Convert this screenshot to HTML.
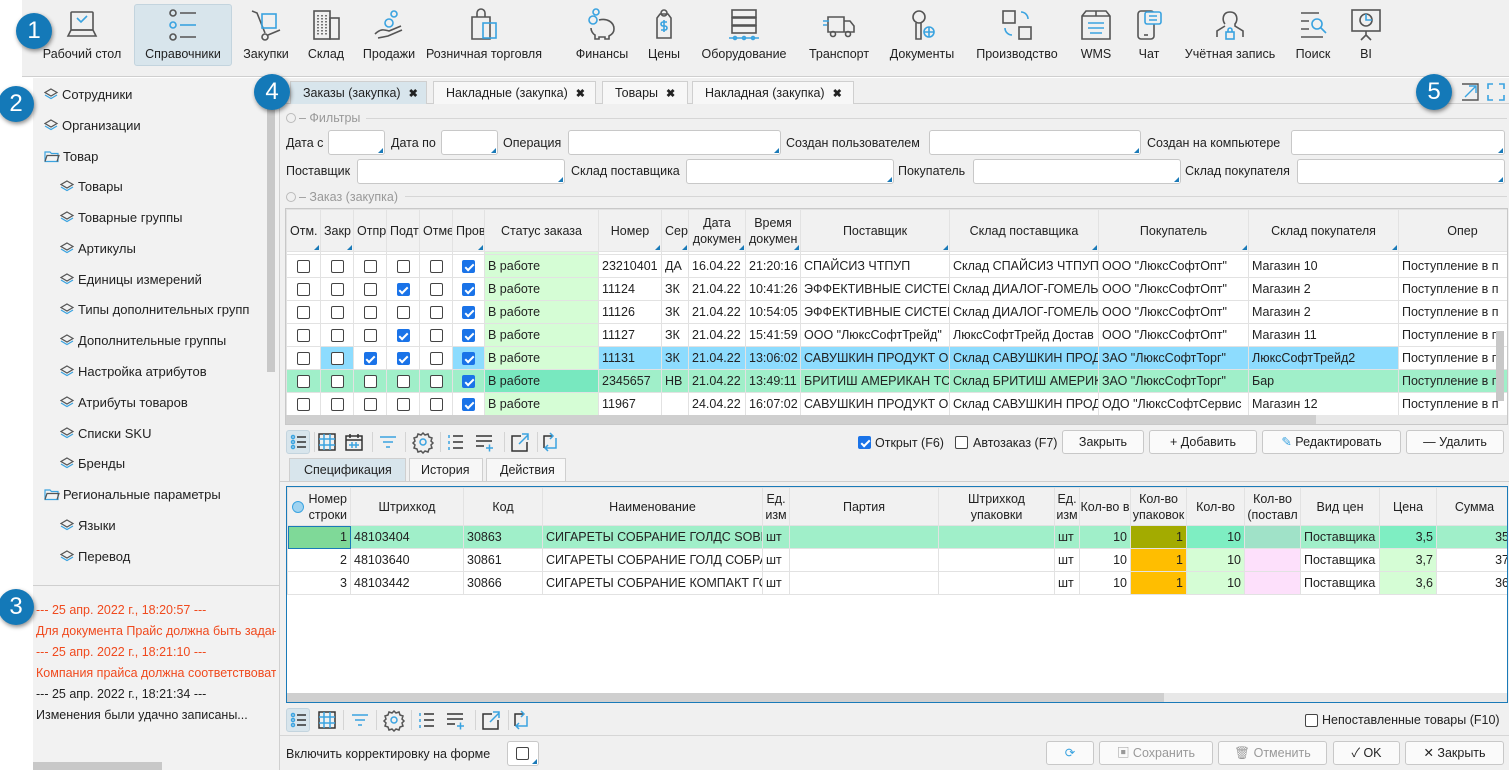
<!DOCTYPE html>
<html><head><meta charset="utf-8">
<style>
*{box-sizing:border-box;margin:0;padding:0}
body{width:1509px;height:770px;overflow:hidden;background:#fff;font-family:"Liberation Sans","Noto Sans CJK SC",sans-serif;font-size:12.5px;color:#222;position:relative}
.a{position:absolute}
#tb{left:22px;top:0;width:1487px;height:77px;background:#f0f0f0;border-bottom:1px solid #cfcfcf}
.ti{position:absolute;top:0;height:66px;text-align:center;font-size:12.5px}
.ti svg{position:absolute;top:8px;left:50%;margin-left:-17px}
.ti span{position:absolute;top:47px;left:0;right:0;white-space:nowrap}
#lp{left:33px;top:78px;width:247px;height:692px;background:#f2f2f2;border-right:1px solid #d0d0d0}
.tr{position:absolute;font-size:13px;white-space:nowrap}
.tr svg{vertical-align:-2px;margin-right:3px}
#rp{left:280px;top:78px;width:1229px;height:692px;background:#f0f0f0}
.tab{position:absolute;top:81px;height:23px;border:1px solid #cfcfcf;border-bottom:none;background:#f7f7f7;font-size:12.5px;padding:4px 0 0 12px;white-space:nowrap}
.tab b{font-size:11px;margin-left:8px}
.lbl{position:absolute;font-size:12.5px;white-space:nowrap}
.inp{position:absolute;height:25px;background:#fff;border:1px solid #c8c8c8;border-radius:3px}
.inp:after{content:"";position:absolute;right:1px;bottom:1px;border-left:5px solid transparent;border-bottom:5px solid #1a7ab8}
.sec{position:absolute;color:#999;font-size:12.5px;white-space:nowrap}
.sec i{display:inline-block;width:10px;height:10px;border:1px solid #bbb;border-radius:50%;vertical-align:-1px;margin-right:3px}
table{border-collapse:collapse;table-layout:fixed;position:absolute;background:#fff}
td,th{border:1px solid #e2e2e2;overflow:hidden;white-space:nowrap;font-weight:normal;padding:0 3px;font-size:12.5px}
th{background:#f1f1f1;text-align:center;line-height:16px;position:relative;white-space:normal;overflow-wrap:normal;word-break:normal}
th.t:after{content:"";position:absolute;right:1px;bottom:1px;border-left:5px solid transparent;border-bottom:5px solid #1a7ab8}
.cb{display:inline-block;width:13px;height:13px;border:1px solid #444;border-radius:2px;background:#fff;vertical-align:middle;position:relative}
.ck{background:#1a73e8;border-color:#1a73e8}
.ck:after{content:"";position:absolute;left:3.5px;top:0.5px;width:3px;height:7px;border:solid #fff;border-width:0 2px 2px 0;transform:rotate(45deg)}
td.c{text-align:center}
td.r{text-align:right}
.g{background:#d5fdd5}
.bl{background:#8ddcfe}
.gr{background:#a0efc9}
.gs{background:#78e8bf}
.btn{position:absolute;height:24px;border:1px solid #c8c8c8;border-radius:3px;background:#fafafa;font-size:12.5px;text-align:center;line-height:22px;white-space:nowrap}
.num{position:absolute;width:36px;height:36px;border-radius:50%;background:#1479b8;color:#fff;font-size:24px;text-align:center;line-height:36px;box-shadow:1px 2px 4px rgba(0,0,0,.45);font-family:"Liberation Sans",sans-serif}
.sep{position:absolute;width:1px;height:20px;background:#d4d4d4}
.log{position:absolute;left:36px;font-size:12.5px;white-space:nowrap;width:240px;overflow:hidden}
</style></head><body>

<div id="tb" class="a">
 <div class="ti" style="left:112px;width:98px;top:4px;height:62px;background:#d8e5ec;border:1px solid #c3d4de;border-radius:3px"></div>
</div>
<div class="ti" style="left:40px;width:84px"><svg width="34" height="34" viewBox="0 0 34 34" fill="none" stroke="#555" stroke-width="1.6"><rect x="6" y="4" width="22" height="18" rx="1"/><path d="M3 28h28l-3-6H6z"/><path d="M12 10l4 4 6-6" stroke="#3aa3e0"/></svg><span>Рабочий стол</span></div>
<div class="ti" style="left:134px;width:98px"><svg width="34" height="34" viewBox="0 0 34 34" fill="none" stroke-width="1.6"><circle cx="7" cy="5" r="3" stroke="#555"/><circle cx="7" cy="17" r="3" stroke="#3aa3e0"/><circle cx="7" cy="29" r="3" stroke="#555"/><path d="M14 5h16M14 29h16" stroke="#555"/><path d="M14 17h16" stroke="#3aa3e0"/></svg><span>Справочники</span></div>
<div class="ti" style="left:238px;width:56px"><svg width="34" height="34" viewBox="0 0 34 34" fill="none" stroke="#555" stroke-width="1.6"><path d="M3 3l5 2 8 20"/><circle cx="16" cy="29" r="3"/><rect x="13" y="6" width="14" height="14" stroke="#3aa3e0"/><path d="M19 27l12-5"/></svg><span>Закупки</span></div>
<div class="ti" style="left:302px;width:48px"><svg width="34" height="34" viewBox="0 0 34 34" fill="none" stroke="#555" stroke-width="1.6"><rect x="5" y="3" width="16" height="28"/><rect x="21" y="10" width="9" height="21"/><path d="M9 7v20M13 7v20M17 7v20" stroke-dasharray="1.5 1.5"/></svg><span>Склад</span></div>
<div class="ti" style="left:356px;width:66px"><svg width="34" height="34" viewBox="0 0 34 34" fill="none" stroke-width="1.6"><circle cx="22" cy="6" r="3" stroke="#3aa3e0"/><circle cx="17" cy="15" r="4" stroke="#3aa3e0"/><path d="M3 26c6-6 10-4 14-3l12-5M6 30l10-2 14-6" stroke="#555"/></svg><span>Продажи</span></div>
<div class="ti" style="left:426px;width:116px"><svg width="34" height="34" viewBox="0 0 34 34" fill="none" stroke-width="1.6"><path d="M5 9h18v22H5zM10 9V5a4 4 0 018 0v4" stroke="#555"/><rect x="16" y="15" width="13" height="15" stroke="#3aa3e0"/></svg><span>Розничная торговля</span></div>
<div class="ti" style="left:570px;width:64px"><svg width="34" height="34" viewBox="0 0 34 34" fill="none" stroke-width="1.6"><circle cx="11" cy="4" r="3" stroke="#3aa3e0"/><circle cx="8" cy="12" r="4" stroke="#3aa3e0"/><path d="M14 12c8-2 15 2 15 9 0 4-3 6-5 7v3h-4v-2h-6v2h-4v-4c-2-1-4-4-4-7" stroke="#555"/></svg><span>Финансы</span></div>
<div class="ti" style="left:642px;width:44px"><svg width="34" height="34" viewBox="0 0 34 34" fill="none" stroke-width="1.6"><path d="M10 10l3-4h8l3 4v20H10z" stroke="#555"/><circle cx="17" cy="5" r="3" stroke="#555"/><path d="M20 14h-4a2 2 0 000 4h2a2 2 0 010 4h-4M17 12v12" stroke="#3aa3e0"/></svg><span>Цены</span></div>
<div class="ti" style="left:694px;width:100px"><svg width="34" height="34" viewBox="0 0 34 34" fill="none" stroke-width="1.6"><rect x="5" y="2" width="24" height="7" stroke="#555"/><rect x="5" y="10" width="24" height="7" stroke="#555"/><rect x="5" y="18" width="24" height="7" stroke="#555"/><path d="M2 30h30" stroke="#3aa3e0"/><circle cx="8" cy="30" r="1.5" stroke="#3aa3e0"/><circle cx="17" cy="30" r="1.5" stroke="#3aa3e0"/><circle cx="26" cy="30" r="1.5" stroke="#3aa3e0"/></svg><span>Оборудование</span></div>
<div class="ti" style="left:804px;width:70px"><svg width="34" height="34" viewBox="0 0 34 34" fill="none" stroke-width="1.6"><path d="M6 9h16v15H6zM22 13h6l4 5v6H22" stroke="#555"/><circle cx="11" cy="26" r="2.5" stroke="#555"/><circle cx="26" cy="26" r="2.5" stroke="#555"/><path d="M1 13h6M1 17h4" stroke="#3aa3e0"/></svg><span>Транспорт</span></div>
<div class="ti" style="left:886px;width:72px"><svg width="34" height="34" viewBox="0 0 34 34" fill="none" stroke-width="1.6"><circle cx="14" cy="9" r="6" stroke="#555"/><path d="M11 15v16h5V15" stroke="#555"/><circle cx="24" cy="24" r="5" stroke="#3aa3e0"/><path d="M19 24h10M24 19v10" stroke="#3aa3e0"/></svg><span>Документы</span></div>
<div class="ti" style="left:970px;width:94px"><svg width="34" height="34" viewBox="0 0 34 34" fill="none" stroke-width="1.6"><rect x="3" y="3" width="12" height="12" stroke="#555"/><rect x="19" y="19" width="12" height="12" stroke="#555"/><path d="M21 4a7 7 0 017 7M5 20a7 7 0 007 7" stroke="#3aa3e0"/></svg><span>Производство</span></div>
<div class="ti" style="left:1074px;width:44px"><svg width="34" height="34" viewBox="0 0 34 34" fill="none" stroke-width="1.6"><path d="M3 8l4-5h20l4 5v23H3zM3 8h28M17 3v5" stroke="#555"/><path d="M9 15h16M9 20h16M11 25h12" stroke="#3aa3e0"/></svg><span>WMS</span></div>
<div class="ti" style="left:1128px;width:42px"><svg width="34" height="34" viewBox="0 0 34 34" fill="none" stroke-width="1.6"><rect x="6" y="3" width="16" height="28" rx="3" stroke="#555"/><path d="M12 27h4" stroke="#555"/><rect x="13" y="4" width="16" height="12" rx="2" fill="#f0f0f0" stroke="#3aa3e0"/><path d="M17 8h8M17 12h8" stroke="#3aa3e0"/></svg><span>Чат</span></div>
<div class="ti" style="left:1180px;width:100px"><svg width="34" height="34" viewBox="0 0 34 34" fill="none" stroke-width="1.6"><path d="M12 16c-3-3-3-12 5-12s8 9 5 12v2l8 5v6M4 29v-6l8-5" stroke="#555"/><rect x="13" y="24" width="8" height="7" stroke="#3aa3e0"/><path d="M15 24v-2a2 2 0 014 0v2" stroke="#3aa3e0"/></svg><span>Учётная запись</span></div>
<div class="ti" style="left:1290px;width:46px"><svg width="34" height="34" viewBox="0 0 34 34" fill="none" stroke-width="1.6"><path d="M5 5h18M5 13h8M5 21h8M5 29h22" stroke="#555"/><circle cx="21" cy="16" r="5" stroke="#3aa3e0"/><path d="M25 20l5 5" stroke="#3aa3e0"/></svg><span>Поиск</span></div>
<div class="ti" style="left:1346px;width:40px"><svg width="34" height="34" viewBox="0 0 34 34" fill="none" stroke-width="1.6"><rect x="3" y="2" width="28" height="21" stroke="#555"/><path d="M17 23v4l-5 5M17 27l5 5" stroke="#555"/><circle cx="17" cy="12" r="6" stroke="#555"/><path d="M17 6v6h6" stroke="#3aa3e0"/></svg><span>BI</span></div>

<div id="lp" class="a">
 <div class="a" style="left:234px;top:2px;width:8px;height:292px;background:#c8c8c8"></div>
 <div class="a" style="left:0;top:507px;width:247px;height:1px;background:#cfcfcf"></div>
 <div class="a" style="left:0;top:684px;width:129px;height:8px;background:#c8c8c8"></div>
</div>
<svg width="0" height="0" style="position:absolute"><defs><g id="ly"><path d="M7 1l6 3.5-6 3.5-6-3.5z" fill="none" stroke="#555" stroke-width="1.2"/><path d="M1 7l6 3.5 6-3.5" fill="none" stroke="#3aa3e0" stroke-width="1.2"/></g><g id="fd"><path d="M1 3h5l1.5 1.5H14v8H1z" fill="none" stroke="#3aa3e0" stroke-width="1.2"/><path d="M1 12.5l2-6h12l-2 6" fill="none" stroke="#555" stroke-width="1.2"/></g></defs></svg>
<div class="tr" style="left:44px;top:87px"><svg width="15" height="13"><use href="#ly"/></svg>Сотрудники</div>
<div class="tr" style="left:44px;top:118px"><svg width="15" height="13"><use href="#ly"/></svg>Организации</div>
<div class="tr" style="left:44px;top:149px"><svg width="16" height="14"><use href="#fd"/></svg>Товар</div>
<div class="tr" style="left:60px;top:179px"><svg width="15" height="13"><use href="#ly"/></svg>Товары</div>
<div class="tr" style="left:60px;top:210px"><svg width="15" height="13"><use href="#ly"/></svg>Товарные группы</div>
<div class="tr" style="left:60px;top:241px"><svg width="15" height="13"><use href="#ly"/></svg>Артикулы</div>
<div class="tr" style="left:60px;top:272px"><svg width="15" height="13"><use href="#ly"/></svg>Единицы измерений</div>
<div class="tr" style="left:60px;top:302px"><svg width="15" height="13"><use href="#ly"/></svg>Типы дополнительных групп</div>
<div class="tr" style="left:60px;top:333px"><svg width="15" height="13"><use href="#ly"/></svg>Дополнительные группы</div>
<div class="tr" style="left:60px;top:364px"><svg width="15" height="13"><use href="#ly"/></svg>Настройка атрибутов</div>
<div class="tr" style="left:60px;top:395px"><svg width="15" height="13"><use href="#ly"/></svg>Атрибуты товаров</div>
<div class="tr" style="left:60px;top:426px"><svg width="15" height="13"><use href="#ly"/></svg>Списки SKU</div>
<div class="tr" style="left:60px;top:456px"><svg width="15" height="13"><use href="#ly"/></svg>Бренды</div>
<div class="tr" style="left:44px;top:487px"><svg width="16" height="14"><use href="#fd"/></svg>Региональные параметры</div>
<div class="tr" style="left:60px;top:518px"><svg width="15" height="13"><use href="#ly"/></svg>Языки</div>
<div class="tr" style="left:60px;top:549px"><svg width="15" height="13"><use href="#ly"/></svg>Перевод</div>

<div class="log" style="top:603px;color:#f04a1e">--- 25 апр. 2022 г., 18:20:57 ---</div>
<div class="log" style="top:624px;color:#f04a1e">Для документа Прайс должна быть задана</div>
<div class="log" style="top:645px;color:#f04a1e">--- 25 апр. 2022 г., 18:21:10 ---</div>
<div class="log" style="top:666px;color:#f04a1e">Компания прайса должна соответствовать</div>
<div class="log" style="top:687px">--- 25 апр. 2022 г., 18:21:34 ---</div>
<div class="log" style="top:708px">Изменения были удачно записаны...</div>

<div id="rp" class="a"></div>
<div class="a" style="left:280px;top:103px;width:1229px;height:1px;background:#cfcfcf"></div>
<div class="tab" style="left:290px;width:137px;background:#d8e5ec">Заказы (закупка)<b>✖</b></div>
<div class="tab" style="left:433px;width:163px">Накладные (закупка)<b>✖</b></div>
<div class="tab" style="left:602px;width:86px">Товары<b>✖</b></div>
<div class="tab" style="left:692px;width:162px">Накладная (закупка)<b>✖</b></div>
<svg class="a" style="left:1461px;top:83px" width="18" height="18" fill="none" stroke-width="1.4"><path d="M1 1h16v16H1" stroke="#555"/><path d="M4 14L15 3M8 3h7v7" stroke="#3aa3e0"/></svg>
<svg class="a" style="left:1487px;top:83px" width="18" height="18" fill="none" stroke="#3aa3e0" stroke-width="1.6"><path d="M1 6V1h5M12 1h5v5M17 12v5h-5M6 17H1v-5"/></svg>

<div class="sec" style="left:286px;top:111px"><i></i>– Фильтры</div>
<div class="a" style="left:366px;top:118px;width:1141px;height:1px;background:#d6d6d6"></div>
<div class="lbl" style="left:286px;top:136px">Дата с</div><div class="inp" style="left:328px;top:130px;width:57px"></div>
<div class="lbl" style="left:391px;top:136px">Дата по</div><div class="inp" style="left:441px;top:130px;width:57px"></div>
<div class="lbl" style="left:503px;top:136px">Операция</div><div class="inp" style="left:568px;top:130px;width:213px"></div>
<div class="lbl" style="left:786px;top:136px">Создан пользователем</div><div class="inp" style="left:929px;top:130px;width:212px"></div>
<div class="lbl" style="left:1147px;top:136px">Создан на компьютере</div><div class="inp" style="left:1291px;top:130px;width:214px"></div>
<div class="lbl" style="left:286px;top:164px">Поставщик</div><div class="inp" style="left:357px;top:159px;width:208px"></div>
<div class="lbl" style="left:571px;top:164px">Склад поставщика</div><div class="inp" style="left:686px;top:159px;width:208px"></div>
<div class="lbl" style="left:898px;top:164px">Покупатель</div><div class="inp" style="left:973px;top:159px;width:208px"></div>
<div class="lbl" style="left:1185px;top:164px">Склад покупателя</div><div class="inp" style="left:1297px;top:159px;width:208px"></div>
<div class="sec" style="left:286px;top:190px"><i></i>– Заказ (закупка)</div>
<div class="a" style="left:405px;top:196px;width:1102px;height:1px;background:#d6d6d6"></div>

<div class="a" style="left:285px;top:208px;width:1223px;height:217px;border:1px solid #c8c8c8;background:#fff;overflow:hidden">
<table style="left:0;top:0;width:1240px">
<colgroup><col style="width:34px"><col style="width:33px"><col style="width:33px"><col style="width:33px"><col style="width:33px"><col style="width:32px"><col style="width:114px"><col style="width:63px"><col style="width:27px"><col style="width:57px"><col style="width:55px"><col style="width:149px"><col style="width:149px"><col style="width:150px"><col style="width:150px"><col style="width:128px"></colgroup>
<tr style="height:42px"><th class="t">Отм.</th><th class="t">Закр</th><th>Отпр</th><th>Подт</th><th>Отме</th><th class="t">Пров</th><th>Статус заказа</th><th class="t">Номер</th><th class="t">Сер</th><th class="t">Дата докумен</th><th class="t">Время докумен</th><th class="t">Поставщик</th><th class="t">Склад поставщика</th><th class="t">Покупатель</th><th class="t">Склад покупателя</th><th>Опер</th></tr>
<tr style="height:3px"><td></td><td></td><td></td><td></td><td></td><td></td><td class="g"></td><td></td><td></td><td></td><td></td><td></td><td></td><td></td><td></td><td></td></tr>
<tr style="height:23px"><td class="c"><span class="cb"></span></td><td class="c"><span class="cb"></span></td><td class="c"><span class="cb"></span></td><td class="c"><span class="cb"></span></td><td class="c"><span class="cb"></span></td><td class="c"><span class="cb ck"></span></td><td class="g">В работе</td><td>23210401</td><td>ДА</td><td>16.04.22</td><td>21:20:16</td><td>СПАЙСИЗ ЧТПУП</td><td>Склад СПАЙСИЗ ЧТПУП</td><td>ООО "ЛюксСофтОпт"</td><td>Магазин 10</td><td>Поступление в п</td></tr>
<tr style="height:23px"><td class="c"><span class="cb"></span></td><td class="c"><span class="cb"></span></td><td class="c"><span class="cb"></span></td><td class="c"><span class="cb ck"></span></td><td class="c"><span class="cb"></span></td><td class="c"><span class="cb ck"></span></td><td class="g">В работе</td><td>11124</td><td>ЗК</td><td>21.04.22</td><td>10:41:26</td><td>ЭФФЕКТИВНЫЕ СИСТЕМ</td><td>Склад ДИАЛОГ-ГОМЕЛЬ</td><td>ООО "ЛюксСофтОпт"</td><td>Магазин 2</td><td>Поступление в п</td></tr>
<tr style="height:23px"><td class="c"><span class="cb"></span></td><td class="c"><span class="cb"></span></td><td class="c"><span class="cb"></span></td><td class="c"><span class="cb"></span></td><td class="c"><span class="cb"></span></td><td class="c"><span class="cb ck"></span></td><td class="g">В работе</td><td>11126</td><td>ЗК</td><td>21.04.22</td><td>10:54:05</td><td>ЭФФЕКТИВНЫЕ СИСТЕМ</td><td>Склад ДИАЛОГ-ГОМЕЛЬ</td><td>ООО "ЛюксСофтОпт"</td><td>Магазин 2</td><td>Поступление в п</td></tr>
<tr style="height:23px"><td class="c"><span class="cb"></span></td><td class="c"><span class="cb"></span></td><td class="c"><span class="cb"></span></td><td class="c"><span class="cb ck"></span></td><td class="c"><span class="cb"></span></td><td class="c"><span class="cb ck"></span></td><td class="g">В работе</td><td>11127</td><td>ЗК</td><td>21.04.22</td><td>15:41:59</td><td>ООО "ЛюксСофтТрейд"</td><td>ЛюксСофтТрейд Достав</td><td>ООО "ЛюксСофтОпт"</td><td>Магазин 11</td><td>Поступление в п</td></tr>
<tr style="height:23px"><td class="c"><span class="cb"></span></td><td class="c bl"><span class="cb"></span></td><td class="c"><span class="cb ck"></span></td><td class="c"><span class="cb ck"></span></td><td class="c"><span class="cb"></span></td><td class="c bl"><span class="cb ck"></span></td><td class="g">В работе</td><td class="bl">11131</td><td class="bl">ЗК</td><td class="bl">21.04.22</td><td class="bl">13:06:02</td><td class="bl">САВУШКИН ПРОДУКТ О</td><td class="bl">Склад САВУШКИН ПРОД</td><td class="bl">ЗАО "ЛюксСофтТорг"</td><td class="bl">ЛюксСофтТрейд2</td><td>Поступление в п</td></tr>
<tr style="height:23px" class="gr"><td class="c"><span class="cb"></span></td><td class="c"><span class="cb"></span></td><td class="c"><span class="cb"></span></td><td class="c"><span class="cb"></span></td><td class="c"><span class="cb"></span></td><td class="c"><span class="cb ck"></span></td><td class="gs">В работе</td><td>2345657</td><td>НВ</td><td>21.04.22</td><td>13:49:11</td><td>БРИТИШ АМЕРИКАН ТС</td><td>Склад БРИТИШ АМЕРИК</td><td>ЗАО "ЛюксСофтТорг"</td><td>Бар</td><td>Поступление в п</td></tr>
<tr style="height:23px"><td class="c"><span class="cb"></span></td><td class="c"><span class="cb"></span></td><td class="c"><span class="cb"></span></td><td class="c"><span class="cb"></span></td><td class="c"><span class="cb"></span></td><td class="c"><span class="cb ck"></span></td><td class="g">В работе</td><td>11967</td><td></td><td>24.04.22</td><td>16:07:02</td><td>САВУШКИН ПРОДУКТ О</td><td>Склад САВУШКИН ПРОД</td><td>ОДО "ЛюксСофтСервис</td><td>Магазин 12</td><td>Поступление в п</td></tr>
</table>
<div class="a" style="left:0;top:206px;width:1221px;height:9px;background:#e8e8e8"></div>
<div class="a" style="left:0;top:206px;width:1030px;height:9px;background:#cfcfcf"></div>
<div class="a" style="left:1210px;top:122px;width:8px;height:70px;background:#c8c8c8"></div>
</div>

<div class="a" style="left:286px;top:430px;width:24px;height:24px;background:#d8e5ec;border:1px solid #c3d4de;border-radius:3px"></div>
<svg class="a" style="left:286px;top:430px" width="290" height="24" fill="none" stroke-width="1.5">
<g stroke="#3aa3e0"><circle cx="7" cy="7" r="1.5"/><circle cx="7" cy="12" r="1.5"/><circle cx="7" cy="17" r="1.5"/></g><path d="M11 7h9M11 12h9M11 17h9" stroke="#333"/>
<rect x="33" y="4" width="16" height="16" stroke="#333"/><path d="M38 4v16M44 4v16M33 9h16M33 15h16" stroke="#3aa3e0"/>
<rect x="60" y="6" width="16" height="14" stroke="#333"/><path d="M60 10h16M64 4v4M72 4v4" stroke="#333"/><path d="M63 15h10M66 12v6M70 12v6" stroke="#3aa3e0"/>
<path d="M94 7h16M97 12h10M100 17h4" stroke="#3aa3e0"/>
<circle cx="137" cy="12" r="3" stroke="#3aa3e0"/><path d="M137 3l2 2 3-1 1 3 3 1-1 3 2 2-2 2 1 3-3 1-1 3-3-1-2 2-2-2-3 1-1-3-3-1 1-3-2-2 2-2-1-3 3-1 1-3 3 1z" stroke="#555"/>
<g stroke="#3aa3e0"><path d="M163 5v3M163 11v3M163 17v3"/></g><path d="M167 6h10M167 12h10M167 18h10" stroke="#333"/>
<path d="M190 6h16M190 11h16M190 16h8" stroke="#333"/><path d="M200 18h7M203.5 14.5v7" stroke="#3aa3e0"/>
<path d="M235 6h-9v15h15v-9" stroke="#333"/><path d="M233 14l9-9M236 4h6v6" stroke="#3aa3e0"/>
<path d="M258 18v-12h8" stroke="#333"/><path d="M264 3l3 3-3 3M270 8v10h-10M262 15l-3 3 3 3" stroke="#3aa3e0"/>
</svg>
<div class="sep" style="left:314px;top:432px"></div><div class="sep" style="left:372px;top:432px"></div><div class="sep" style="left:405px;top:432px"></div><div class="sep" style="left:440px;top:432px"></div><div class="sep" style="left:504px;top:432px"></div><div class="sep" style="left:537px;top:432px"></div>

<div class="a" style="left:858px;top:435px"><span class="cb ck"></span></div><div class="lbl" style="left:875px;top:436px">Открыт (F6)</div>
<div class="a" style="left:955px;top:435px"><span class="cb"></span></div><div class="lbl" style="left:973px;top:436px">Автозаказ (F7)</div>
<div class="btn" style="left:1062px;top:430px;width:82px">Закрыть</div>
<div class="btn" style="left:1149px;top:430px;width:108px">+ Добавить</div>
<div class="btn" style="left:1262px;top:430px;width:139px"><span style="color:#3aa3e0">✎</span> Редактировать</div>
<div class="btn" style="left:1406px;top:430px;width:98px">— Удалить</div>

<div class="a" style="left:280px;top:481px;width:1229px;height:1px;background:#cfcfcf"></div>
<div class="tab" style="left:289px;top:458px;width:117px;background:#d8e5ec;padding-left:14px">Спецификация</div>
<div class="tab" style="left:409px;top:458px;width:74px;padding-left:11px">История</div>
<div class="tab" style="left:486px;top:458px;width:80px;padding-left:13px">Действия</div>

<div class="a" style="left:286px;top:486px;width:1222px;height:217px;border:1px solid #1a7ab8;background:#fff;overflow:hidden">
<table style="left:0;top:0;width:1225px">
<colgroup><col style="width:63px"><col style="width:113px"><col style="width:79px"><col style="width:220px"><col style="width:27px"><col style="width:149px"><col style="width:116px"><col style="width:25px"><col style="width:51px"><col style="width:56px"><col style="width:58px"><col style="width:56px"><col style="width:79px"><col style="width:57px"><col style="width:76px"></colgroup>
<tr style="height:38px"><th style="text-align:right;padding-left:16px"><span style="position:absolute;left:4px;top:13px;width:12px;height:12px;border-radius:50%;background:#9fd3f0;border:1px solid #3aa3e0"></span>Номер строки</th><th>Штрихкод</th><th>Код</th><th>Наименование</th><th style="padding:0">Ед. изм</th><th>Партия</th><th>Штрихкод упаковки</th><th style="padding:0">Ед. изм</th><th style="padding:0">Кол-во в</th><th style="padding:0">Кол-во упаковок</th><th>Кол-во</th><th style="padding:0">Кол-во (поставл</th><th>Вид цен</th><th>Цена</th><th>Сумма</th></tr>
<tr style="height:23px" class="gr"><td class="r" style="background:#7fd998;outline:1px solid #1a7ab8;outline-offset:-1px">1</td><td>48103404</td><td>30863</td><td>СИГАРЕТЫ СОБРАНИЕ ГОЛДС SOBR</td><td>шт</td><td></td><td></td><td>шт</td><td class="r">10</td><td class="r" style="background:#a3ab00">1</td><td class="r" style="background:#7eeec2">10</td><td style="background:#a0e2c8"></td><td>Поставщика</td><td class="r" style="background:#7eeec2">3,5</td><td class="r">35</td></tr>
<tr style="height:23px"><td class="r">2</td><td>48103640</td><td>30861</td><td>СИГАРЕТЫ СОБРАНИЕ ГОЛД СОБРА</td><td>шт</td><td></td><td></td><td>шт</td><td class="r">10</td><td class="r" style="background:#ffbe00">1</td><td class="r g">10</td><td style="background:#fde0fb"></td><td>Поставщика</td><td class="r g">3,7</td><td class="r">37</td></tr>
<tr style="height:23px"><td class="r">3</td><td>48103442</td><td>30866</td><td>СИГАРЕТЫ СОБРАНИЕ КОМПАКТ ГС</td><td>шт</td><td></td><td></td><td>шт</td><td class="r">10</td><td class="r" style="background:#ffbe00">1</td><td class="r g">10</td><td style="background:#fde0fb"></td><td>Поставщика</td><td class="r g">3,6</td><td class="r">36</td></tr>
</table>
<div class="a" style="left:0;top:206px;width:1220px;height:9px;background:#e8e8e8"></div>
<div class="a" style="left:0;top:206px;width:877px;height:9px;background:#cfcfcf"></div>
</div>

<div class="a" style="left:286px;top:708px;width:24px;height:24px;background:#d8e5ec;border:1px solid #c3d4de;border-radius:3px"></div>
<svg class="a" style="left:286px;top:708px" width="260" height="24" fill="none" stroke-width="1.5">
<g stroke="#3aa3e0"><circle cx="7" cy="7" r="1.5"/><circle cx="7" cy="12" r="1.5"/><circle cx="7" cy="17" r="1.5"/></g><path d="M11 7h9M11 12h9M11 17h9" stroke="#333"/>
<rect x="33" y="4" width="16" height="16" stroke="#333"/><path d="M38 4v16M44 4v16M33 9h16M33 15h16" stroke="#3aa3e0"/>
<path d="M66 7h16M69 12h10M72 17h4" stroke="#3aa3e0"/>
<circle cx="108" cy="12" r="3" stroke="#3aa3e0"/><path d="M108 3l2 2 3-1 1 3 3 1-1 3 2 2-2 2 1 3-3 1-1 3-3-1-2 2-2-2-3 1-1-3-3-1 1-3-2-2 2-2-1-3 3-1 1-3 3 1z" stroke="#555"/>
<g stroke="#3aa3e0"><path d="M134 5v3M134 11v3M134 17v3"/></g><path d="M138 6h10M138 12h10M138 18h10" stroke="#333"/>
<path d="M161 6h16M161 11h16M161 16h8" stroke="#333"/><path d="M171 18h7M174.5 14.5v7" stroke="#3aa3e0"/>
<path d="M206 6h-9v15h15v-9" stroke="#333"/><path d="M204 14l9-9M207 4h6v6" stroke="#3aa3e0"/>
<path d="M229 18v-12h8" stroke="#333"/><path d="M235 3l3 3-3 3M241 8v10h-10M233 15l-3 3 3 3" stroke="#3aa3e0"/>
</svg>
<div class="sep" style="left:343px;top:710px"></div><div class="sep" style="left:376px;top:710px"></div><div class="sep" style="left:411px;top:710px"></div><div class="sep" style="left:475px;top:710px"></div><div class="sep" style="left:508px;top:710px"></div>
<div class="a" style="left:1305px;top:713px"><span class="cb"></span></div><div class="lbl" style="left:1322px;top:713px">Непоставленные товары (F10)</div>
<div class="a" style="left:280px;top:735px;width:1229px;height:1px;background:#d6d6d6"></div>

<div class="lbl" style="left:286px;top:747px">Включить корректировку на форме</div>
<div class="inp" style="left:507px;top:741px;width:32px;height:25px"><span class="cb" style="position:absolute;left:8px;top:5px"></span></div>
<div class="btn" style="left:1046px;top:741px;width:48px;color:#3aa3e0">⟳</div>
<div class="btn" style="left:1099px;top:741px;width:114px;color:#999">▣ Сохранить</div>
<div class="btn" style="left:1218px;top:741px;width:109px;color:#999">🗑 Отменить</div>
<div class="btn" style="left:1333px;top:741px;width:67px">✓ OK</div>
<div class="btn" style="left:1405px;top:741px;width:99px">✕ Закрыть</div>

<div class="num" style="left:16px;top:13px">1</div>
<div class="num" style="left:-2px;top:86px">2</div>
<div class="num" style="left:-2px;top:589px">3</div>
<div class="num" style="left:254px;top:74px">4</div>
<div class="num" style="left:1416px;top:74px">5</div>
</body></html>
